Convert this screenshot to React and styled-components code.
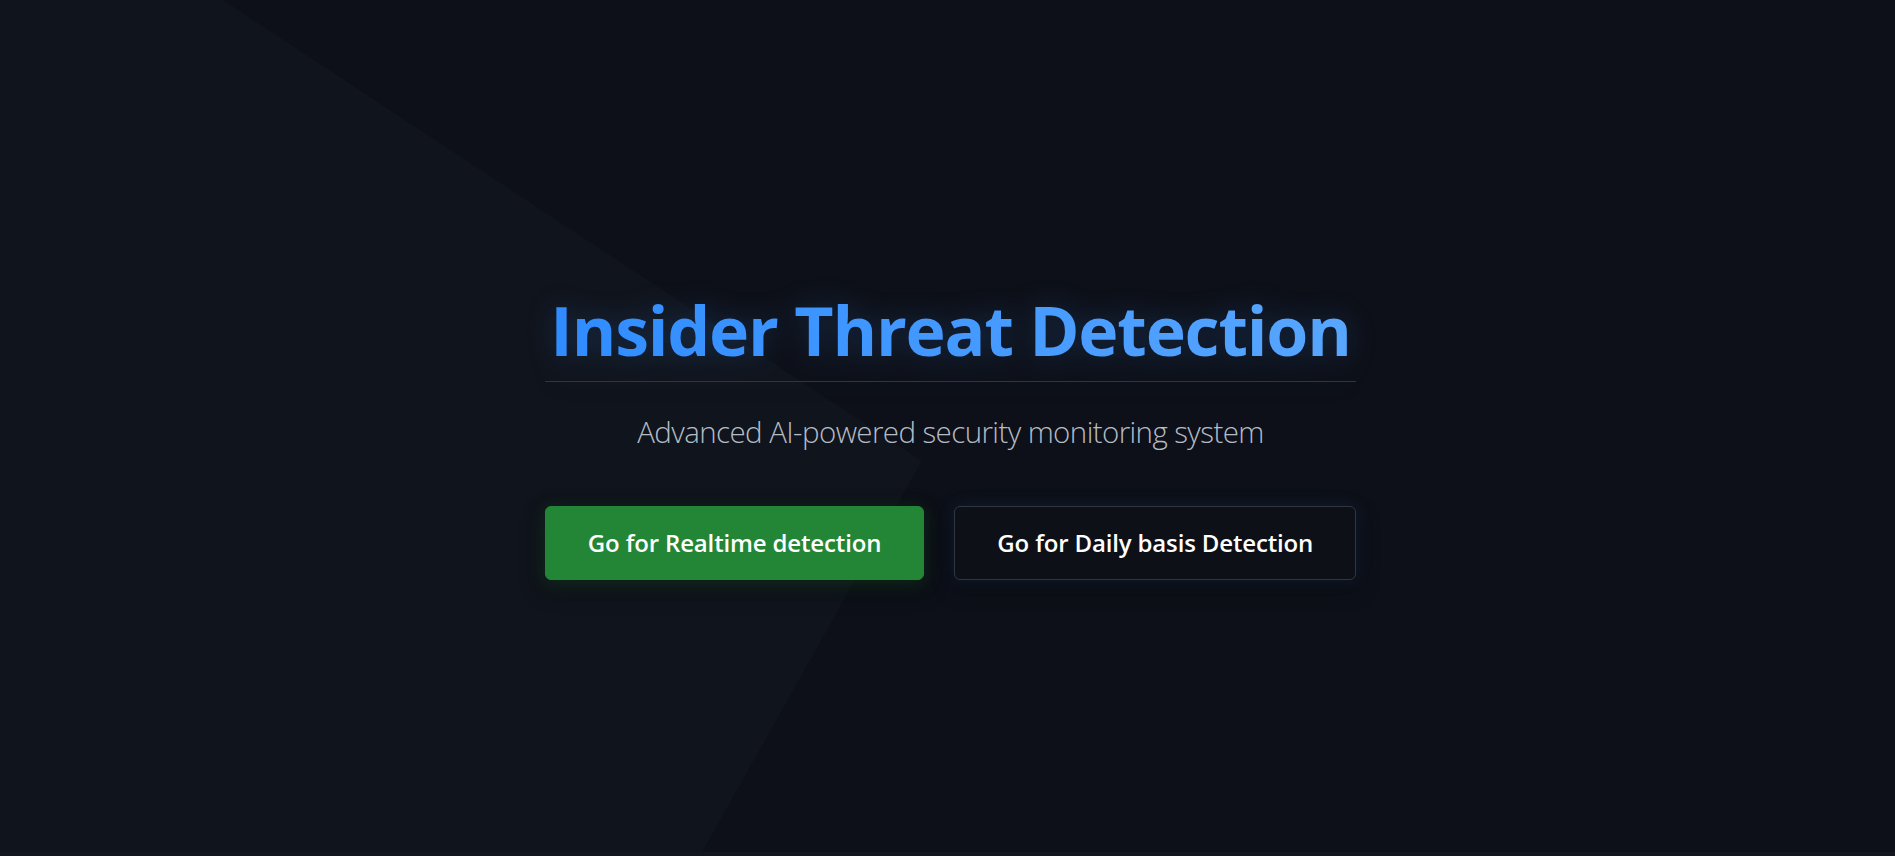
import React from "react";
import styled, { createGlobalStyle } from "styled-components";

const GlobalStyle = createGlobalStyle`
  html { background: #12161f; }
  body {
    margin: 0;
    background: #0d1018;
    font-family: "Open Sans", "Noto Sans", "Liberation Sans", sans-serif;
    overflow: hidden;
  }
  * { box-sizing: border-box; }
`;

const Page = styled.main`
  position: relative;
  overflow: hidden;
  height: 852px;
  background: #0d1018;
  display: flex;
  align-items: center;
  justify-content: center;
`;

const Backdrop = styled.div`
  position: absolute;
  inset: 0;
  background: #10141c;
  clip-path: polygon(0 0, 223px 0, 922px 461px, 700px 856px, 0 856px);
  pointer-events: none;
`;

const Hero = styled.section`
  position: relative;
  z-index: 1;
  display: flex;
  flex-direction: column;
  align-items: stretch;
  padding: 40px 39px;
  margin-top: 17px;
  margin-left: 6px;
`;

const Title = styled.h1`
  margin: 0;
  padding-bottom: 10px;
  border-bottom: 1px solid #30363d;
  text-align: center;
  font-size: 68px;
  font-weight: 700;
  line-height: 1.2;
  letter-spacing: -1.2px;
  background: linear-gradient(90deg, #2f8cff 0%, #58a6ff 100%);
  -webkit-background-clip: text;
  background-clip: text;
  color: transparent;
  filter: drop-shadow(0 0 14px rgba(56, 139, 253, 0.22));
`;

const Subtitle = styled.p`
  margin: 31px 0 0;
  text-align: center;
  font-size: 29.5px;
  font-weight: 300;
  line-height: 1.3;
  letter-spacing: -0.6px;
  color: #b4bcc6;
`;

const Actions = styled.div`
  display: flex;
  gap: 30px;
  margin-top: 55px;
`;

const Button = styled.button`
  height: 74px;
  padding: 0 42px;
  border-radius: 6px;
  border: 1px solid ${(p) => (p.$primary ? "#238636" : "#30363d")};
  background: ${(p) => (p.$primary ? "#238636" : "#0d1117")};
  color: #ffffff;
  font-family: "Open Sans", "Noto Sans", sans-serif;
  font-size: 24px;
  font-weight: 600;
  letter-spacing: -0.15px;
  cursor: pointer;
  box-shadow: ${(p) =>
    p.$primary
      ? "0 4px 18px rgba(35, 134, 54, 0.25), 0 8px 24px rgba(0, 0, 0, 0.35)"
      : "0 0 18px rgba(56, 139, 253, 0.12), 0 8px 24px rgba(0, 0, 0, 0.3)"};
`;

export default function App() {
  return (
    <>
      <GlobalStyle />
      <Page>
        <Backdrop />
        <Hero>
          <Title>Insider Threat Detection</Title>
          <Subtitle>Advanced AI-powered security monitoring system</Subtitle>
          <Actions>
            <Button $primary>Go for Realtime detection</Button>
            <Button>Go for Daily basis Detection</Button>
          </Actions>
        </Hero>
      </Page>
    </>
  );
}
